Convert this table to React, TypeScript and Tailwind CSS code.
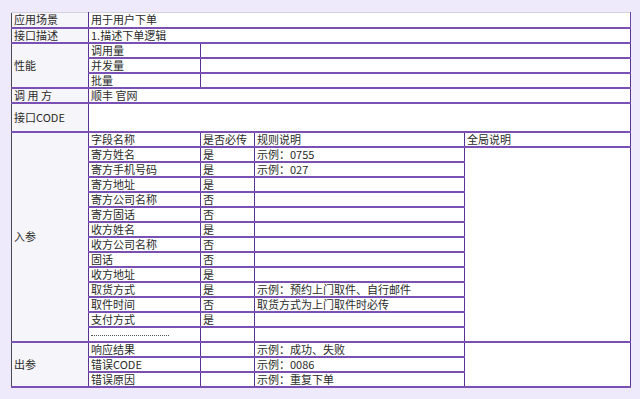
const fields: [string, string, string][] = [
  ['寄方姓名', '是', '示例：0755'],
  ['寄方手机号码', '是', '示例：027'],
  ['寄方地址', '是', ''],
  ['寄方公司名称', '否', ''],
  ['寄方固话', '否', ''],
  ['收方姓名', '是', ''],
  ['收方公司名称', '否', ''],
  ['固话', '否', ''],
  ['收方地址', '是', ''],
  ['取货方式', '是', '示例：预约上门取件、自行邮件'],
  ['取件时间', '否', '取货方式为上门取件时必传'],
  ['支付方式', '是', ''],
]

const outputs: [string, string][] = [
  ['响应结果', '示例：成功、失败'],
  ['错误CODE', '示例：0086'],
  ['错误原因', '示例：重复下单'],
]

// horizontal rules are the heavier purple ones, verticals thinner and darker
const base = 'px-[2px] py-0 align-middle whitespace-nowrap border-b-2 border-b-[#7a50b4] border-r-[1.5px] border-r-[#5a3194]'
const td = base + ' border-t-2 border-t-[#7a50b4]'
const label = base + ' border-t-2 border-t-[#7a50b4] border-l border-l-[#4a4a55] bg-[#f6f5f9]'
const tdTop = base + ' border-t border-t-[#d4d2dc]'
const labelTop = base + ' border-t border-t-[#d4d2dc] border-l border-l-[#4a4a55] bg-[#f6f5f9]'

export default function App() {
  return (
    <div
      className="w-[640px] h-[399px] bg-[#eeeafb] pt-[12px] pl-[11px] text-[11px] leading-[13px] text-[#2a2a2a]"
      style={{ fontFamily: '"Noto Sans CJK SC", "Noto Sans", sans-serif' }}
    >
      <table className="border-collapse bg-white table-fixed w-[619px]">
        <colgroup>
          <col className="w-[77px]" />
          <col className="w-[112px]" />
          <col className="w-[54px]" />
          <col className="w-[210px]" />
          <col className="w-[166px]" />
        </colgroup>
        <tbody>
          <tr className="h-[15px]">
            <td className={labelTop}>应用场景</td>
            <td className={tdTop + ' border-r-2 border-r-[#6f45a8]'} colSpan={4}>用于用户下单</td>
          </tr>
          <tr className="h-[15px]">
            <td className={label}>接口描述</td>
            <td className={td} colSpan={4}>1.描述下单逻辑</td>
          </tr>
          <tr className="h-[15px]">
            <td className={label} rowSpan={3}>性能</td>
            <td className={td}>调用量</td>
            <td className={td} colSpan={3}></td>
          </tr>
          <tr className="h-[15px]">
            <td className={td}>并发量</td>
            <td className={td} colSpan={3}></td>
          </tr>
          <tr className="h-[15px]">
            <td className={td}>批量</td>
            <td className={td} colSpan={3}></td>
          </tr>
          <tr className="h-[15px]">
            <td className={label}>调 用 方</td>
            <td className={td} colSpan={4}>顺丰 官网</td>
          </tr>
          <tr className="h-[29px]">
            <td className={label}>接口CODE</td>
            <td className={td} colSpan={4}></td>
          </tr>
          <tr className="h-[15px]">
            <td className={label} rowSpan={14}>入参</td>
            <td className={td}>字段名称</td>
            <td className={td}>是否必传</td>
            <td className={td}>规则说明</td>
            <td className={td}>全局说明</td>
          </tr>
          {fields.map(([name, req, rule], i) => (
            <tr className="h-[15px]" key={name}>
              <td className={td}>{name}</td>
              <td className={td}>{req}</td>
              <td className={td}>{rule}</td>
              {i === 0 && <td className={td} rowSpan={13}></td>}
            </tr>
          ))}
          <tr className="h-[15px]">
            <td className={td}>
              <div className="w-[78px] border-b border-dotted border-[#555] mt-[2px]"></div>
            </td>
            <td className={td}></td>
            <td className={td}></td>
          </tr>
          {outputs.map(([name, rule], i) => (
            <tr className="h-[15px]" key={name}>
              {i === 0 && <td className={label} rowSpan={3}>出参</td>}
              <td className={td}>{name}</td>
              <td className={td}></td>
              <td className={td}>{rule}</td>
              {i === 0 && <td className={td} rowSpan={3}></td>}
            </tr>
          ))}
        </tbody>
      </table>
    </div>
  )
}
